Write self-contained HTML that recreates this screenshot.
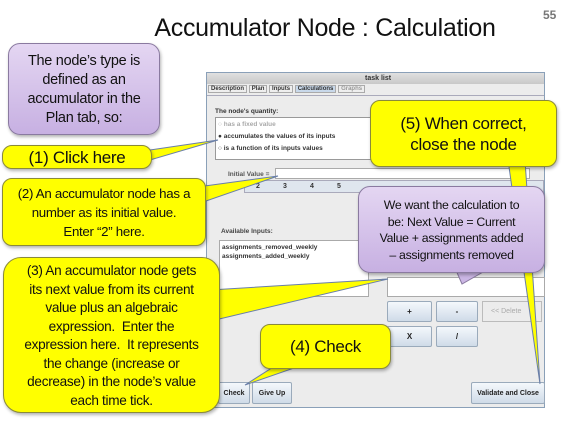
<!DOCTYPE html>
<html><head><meta charset="utf-8"><style>
*{margin:0;padding:0;box-sizing:border-box}
body{width:567px;height:425px;background:#fff;position:relative;overflow:hidden;font-family:"Liberation Sans",sans-serif}
.a{position:absolute}
.t{font-family:"Liberation Sans",sans-serif;text-align:center;color:#111;letter-spacing:-0.3px;white-space:nowrap}
.y{background:#ffff00;border:1px solid #8a8a3a;border-radius:10px;box-shadow:1px 2px 3px rgba(0,0,0,.3)}
.p{background:linear-gradient(#e4d6f2,#c7b0e2);border:1px solid #8a7aa0;border-radius:12px;box-shadow:1px 2px 3px rgba(0,0,0,.3)}
.s{font-size:7px;font-weight:bold;color:#333}
.b{background:linear-gradient(#f4f8fc,#cfdbe8);border:1px solid #9aaabb;border-radius:2px;font-size:8px;font-weight:bold;color:#222;text-align:center}
</style></head><body>
<div class="a t" style="left:140px;top:14px;width:370px;font-size:25px">Accumulator Node : Calculation</div>
<div class="a" style="left:543px;top:8px;font-size:12px;font-weight:bold;color:#777">55</div>

<div class="a" style="left:206px;top:72px;width:339px;height:336px;background:#ececec;border:1px solid #8aa0b8"></div>
<div class="a" style="left:207px;top:73px;width:337px;height:11px;background:linear-gradient(#e0e0e0,#c8c8c8)"></div>
<div class="a s" style="left:365px;top:75px">task list</div>
<div class="a s" style="left:208px;top:86px;font-size:6px;">
<span style="border:1px solid #aaa;padding:0 2px;background:#eee">Description</span> <span style="border:1px solid #aaa;padding:0 2px;background:#eee">Plan</span> <span style="border:1px solid #aaa;padding:0 2px;background:#eee">Inputs</span> <span style="border:1px solid #aaa;padding:0 2px;background:#c8d8ea">Calculations</span> <span style="border:1px solid #aaa;padding:0 2px;color:#999;background:#eee">Graphs</span></div>
<div class="a" style="left:207px;top:95px;width:337px;height:1px;background:#aab"></div>
<div class="a s" style="left:215px;top:108px;font-size:6.5px">The node's quantity:</div>
<div class="a" style="left:215px;top:117px;width:160px;height:43px;background:#fff;border:1px solid #999"></div>
<div class="a s" style="left:218px;top:121px;font-size:6.5px;color:#aaa">○ has a fixed value</div>
<div class="a s" style="left:218px;top:133px;font-size:6.5px">● accumulates the values of its inputs</div>
<div class="a s" style="left:218px;top:145px;font-size:6.5px">○ is a function of its inputs values</div>
<div class="a s" style="left:228px;top:171px;font-size:6.5px;color:#555">Initial Value =</div>
<div class="a" style="left:275px;top:168px;width:255px;height:11px;background:#fff;border:1px solid #aaa"></div>
<div class="a" style="left:244px;top:180px;width:300px;height:13px;border:1px solid #aab;background:#dfe6ee"></div>
<div class="a s" style="left:256px;top:183px">2</div><div class="a s" style="left:283px;top:183px">3</div><div class="a s" style="left:310px;top:183px">4</div><div class="a s" style="left:337px;top:183px">5</div>
<div class="a s" style="left:221px;top:228px;font-size:6.5px;color:#444">Available Inputs:</div>
<div class="a" style="left:219px;top:240px;width:150px;height:57px;background:#fff;border:1px solid #aaa"></div>
<div class="a s" style="left:222px;top:243px;font-size:6.5px;line-height:9px">assignments_removed_weekly<br>assignments_added_weekly</div>
<div class="a" style="left:387px;top:277px;width:158px;height:20px;background:#fff;border:1px solid #aaa"></div>
<div class="a b" style="left:387px;top:301px;width:45px;height:21px;line-height:20px">+</div>
<div class="a b" style="left:436px;top:301px;width:42px;height:21px;line-height:20px">-</div>
<div class="a" style="left:482px;top:301px;width:60px;height:21px;border:1px solid #bbb;font-size:7px;color:#aaa;line-height:20px;padding-left:8px">&lt;&lt; Delete</div>
<div class="a b" style="left:387px;top:326px;width:45px;height:21px;line-height:20px">X</div>
<div class="a b" style="left:436px;top:326px;width:42px;height:21px;line-height:20px">/</div>
<div class="a b" style="left:218px;top:382px;width:32px;height:22px;line-height:21px;font-size:7px">Check</div>
<div class="a b" style="left:252px;top:382px;width:40px;height:22px;line-height:21px;font-size:7px">Give Up</div>
<div class="a b" style="left:471px;top:382px;width:74px;height:22px;line-height:21px;font-size:7px">Validate and Close</div>

<svg class="a" style="left:0;top:0" width="567" height="425">
<g fill="#ffff00" stroke="#6a7fa8" stroke-width="1">
<polygon points="150,150 218,140 150,160"/>
<polygon points="190,188 278,176 180,210"/>
<polygon points="210,290 388,279 215,320"/>
<polygon points="300,350 245,385 340,352"/>
<polygon points="508,160 540,384 525,160"/>
</g>
<polygon points="455,268 462,284 490,268" fill="#cbb6e4" stroke="#8a7aa0"/>
</svg>

<div class="a p t" style="left:8px;top:43px;width:152px;height:92px;font-size:14.5px;line-height:19px;padding-top:8px">The node’s type is<br>defined as an<br>accumulator in the<br>Plan tab, so:</div>
<div class="a y t" style="left:2px;top:145px;width:150px;height:24px;font-size:17px;line-height:23px">(1) Click here</div>
<div class="a y t" style="left:2px;top:178px;width:204px;height:68px;font-size:13.3px;line-height:19px;padding-top:5px">(2) An accumulator node has a<br>number as its initial value.<br>Enter “2” here.</div>
<div class="a y t" style="left:3px;top:257px;width:217px;height:156px;font-size:13.6px;line-height:18.5px;padding-top:4px;border-radius:18px">(3) An accumulator node gets<br>its next value from its current<br>value plus an algebraic<br>expression.&nbsp; Enter the<br>expression here.&nbsp; It represents<br>the change (increase or<br>decrease) in the node’s value<br>each time tick.</div>
<div class="a y t" style="left:260px;top:324px;width:131px;height:45px;font-size:17px;line-height:43px">(4) Check</div>
<div class="a y t" style="left:370px;top:100px;width:187px;height:67px;font-size:17px;line-height:21px;padding-top:12px">(5) When correct,<br>close the node</div>
<div class="a p t" style="left:358px;top:186px;width:187px;height:87px;font-size:12.3px;line-height:16.5px;padding-top:10px">We want the calculation to<br>be: Next Value = Current<br>Value + assignments added<br>– assignments removed</div>
</body></html>
